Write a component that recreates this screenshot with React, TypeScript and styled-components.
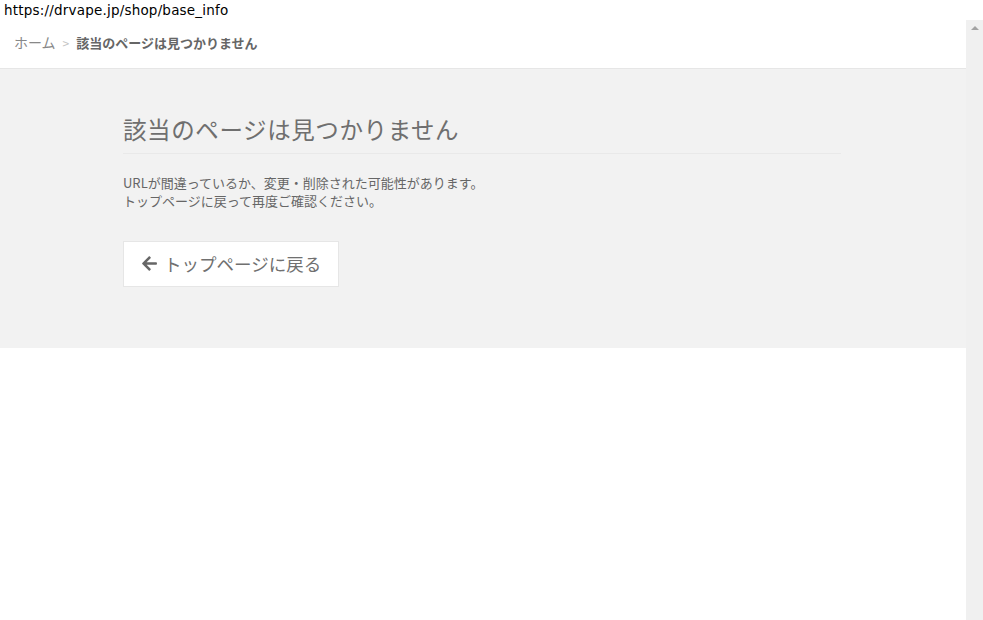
import React from "react";
import styled, { createGlobalStyle } from "styled-components";

const Global = createGlobalStyle`
  html, body { margin: 0; padding: 0; background: #fff; }
  body { font-family: "Noto Sans CJK JP", "Noto Sans", sans-serif; overflow: hidden; }
  * { box-sizing: border-box; }
`;

const Screen = styled.div`
  display: flex;
  flex-direction: column;
  width: 983px;
  height: 620px;
  overflow: hidden;
`;

const UrlBar = styled.div`
  height: 20px;
  padding: 2px 0 0 4px;
  font-family: "DejaVu Sans", sans-serif;
  font-size: 13.5px;
  letter-spacing: 0.2px;
  line-height: 16px;
  color: #000;
  background: #fff;
`;

const Viewport = styled.div`
  flex: 1;
  display: flex;
  min-height: 0;
`;

const Page = styled.div`
  flex: 1;
  display: flex;
  flex-direction: column;
  background: #fff;
`;

const Scrollbar = styled.div`
  width: 17px;
  background: #f0f0f0;
  display: flex;
  justify-content: center;
  padding-top: 6px;
`;

const ArrowUp = styled.div`
  width: 0;
  height: 0;
  border-left: 4px solid transparent;
  border-right: 4px solid transparent;
  border-bottom: 4px solid #a3a3a3;
`;

const Breadcrumb = styled.nav`
  height: 49px;
  display: flex;
  align-items: center;
  gap: 7px;
  padding: 0 0 4px 14px;
  border-bottom: 1px solid #e6e6e6;
  font-size: 13px;
  color: #777;
`;

const Crumb = styled.span<{ $current?: boolean }>`
  font-weight: ${(p) => (p.$current ? 700 : 400)};
  color: ${(p) => (p.$current ? "#666" : "#888")};
  font-size: ${(p) => (p.$current ? "13px" : "14px")};
`;

const Sep = styled.span`
  color: #c4c4c4;
  font-size: 12px;
`;

const Section = styled.section`
  background: #f2f2f2;
  padding: 45px 0 61px;
`;

const Inner = styled.div`
  width: 718px;
  margin-left: 123px;
`;

const Title = styled.h1`
  margin: 0;
  padding-bottom: 9px;
  font-size: 23.5px;
  font-weight: 400;
  line-height: 30px;
  color: #6f6f6f;
  letter-spacing: 0.6px;
  border-bottom: 1px solid #e9e9e9;
`;

const Text = styled.p`
  margin: 20px 0 0;
  font-size: 13px;
  line-height: 18px;
  color: #666;
`;

const BackButton = styled.a`
  display: inline-flex;
  align-items: center;
  gap: 6px;
  margin-top: 31px;
  height: 46px;
  padding: 0 17px 2px 17px;
  background: #fff;
  border: 1px solid #e6e6e6;
  font-size: 17.5px;
  color: #707070;
  text-decoration: none;
`;

const Icon = styled.svg`
  width: 17px;
  height: 17px;
  flex: none;
`;

export default function App() {
  return (
    <>
      <Global />
      <Screen>
        <UrlBar>https://drvape.jp/shop/base_info</UrlBar>
        <Viewport>
          <Page>
            <Breadcrumb>
              <Crumb>ホーム</Crumb>
              <Sep>&gt;</Sep>
              <Crumb $current>該当のページは見つかりません</Crumb>
            </Breadcrumb>
            <Section>
              <Inner>
                <Title>該当のページは見つかりません</Title>
                <Text>
                  URLが間違っているか、変更・削除された可能性があります。
                  <br />
                  トップページに戻って再度ご確認ください。
                </Text>
                <BackButton href="#">
                  <Icon viewBox="0 0 448 512" fill="#666">
                    <path d="M257.5 445.1l-22.2 22.2c-9.4 9.4-24.6 9.4-33.9 0L7 273c-9.4-9.4-9.4-24.6 0-33.9L201.4 44.7c9.4-9.4 24.6-9.4 33.9 0l22.2 22.2c9.5 9.5 9.3 25-.4 34.3L136.6 216H424c13.3 0 24 10.7 24 24v32c0 13.3-10.7 24-24 24H136.6l120.5 114.8c9.8 9.3 10 24.8.4 34.3z" />
                  </Icon>
                  トップページに戻る
                </BackButton>
              </Inner>
            </Section>
          </Page>
          <Scrollbar>
            <ArrowUp />
          </Scrollbar>
        </Viewport>
      </Screen>
    </>
  );
}
